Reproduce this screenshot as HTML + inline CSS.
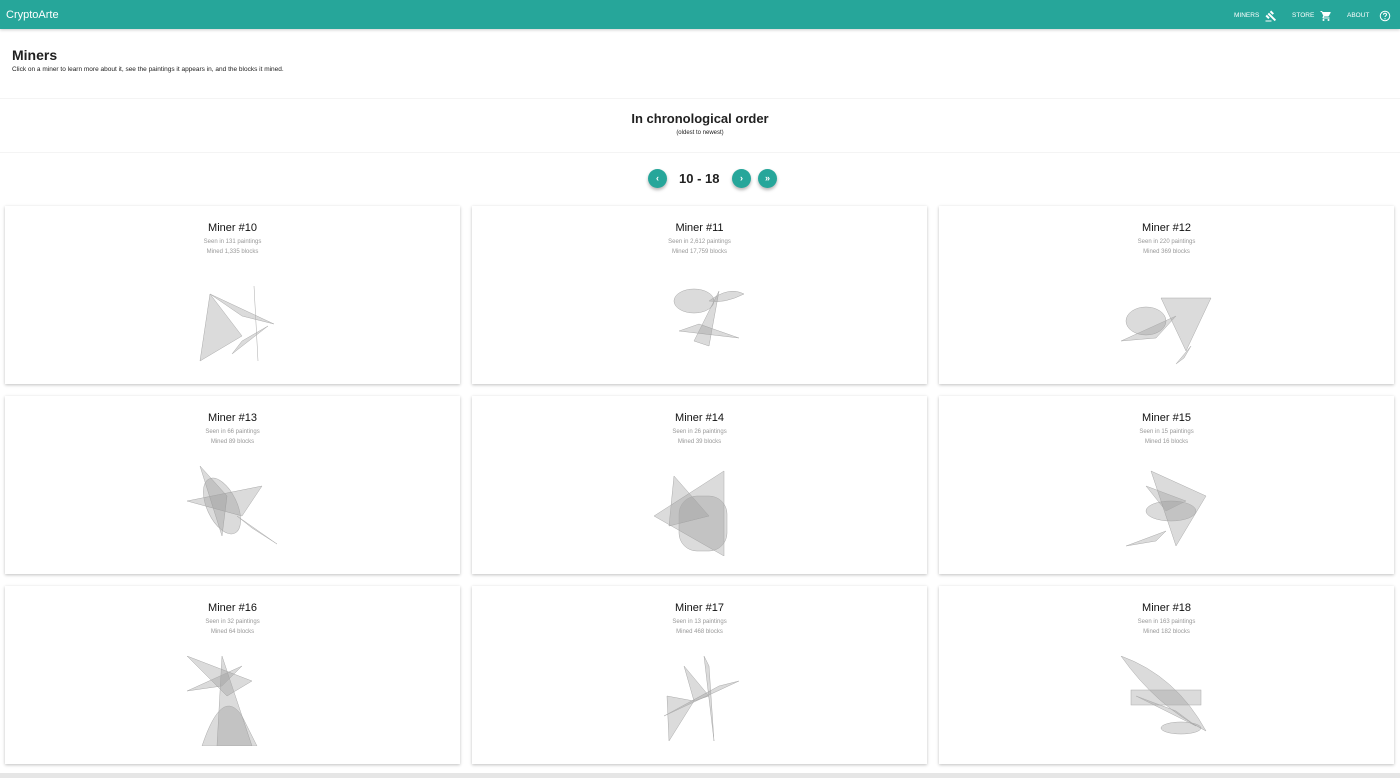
<!DOCTYPE html>
<html><head><meta charset="utf-8"><style>
*{box-sizing:border-box;margin:0;padding:0}
body{width:1400px;height:778px;overflow:hidden;background:#fff;font-family:"Liberation Sans",Arial,sans-serif;color:#212121}
.bar{height:29px;background:#26a69a;color:#fff;position:relative;box-shadow:0 1px 3px rgba(0,0,0,.2)}
.logo{position:absolute;left:6px;top:9px;font-size:11px}
.nav{position:absolute;top:1px;height:29px;font-size:6.5px;display:flex;align-items:center;gap:6px}
h1{position:absolute;left:12px;top:47px;font-size:14px;font-weight:bold}
.sub{position:absolute;left:12px;top:66px;font-size:6.5px}
.hr{position:absolute;left:0;right:0;height:1px;background:#f4f4f4}
h2{position:absolute;left:0;width:1400px;text-align:center;top:111px;font-size:13px;font-weight:bold}
.sm{position:absolute;left:0;width:1400px;text-align:center;top:130px;font-size:6px}
.btn{position:absolute;top:169px;width:19px;height:19px;border-radius:50%;background:#26a69a;color:#fff;font-size:9px;text-align:center;line-height:19px;box-shadow:0 2px 3px rgba(0,0,0,.3);font-weight:bold}
.pg{position:absolute;left:679px;top:171px;font-size:13px;font-weight:bold}
.card{position:absolute;width:455px;height:178px;background:#fff;box-shadow:0 1px 3px rgba(0,0,0,.25);text-align:center}
.card .t{margin-top:16px;font-size:11px;color:#111;line-height:13px}
.card .s{font-size:6px;color:#999;line-height:10px;margin-top:2px}
.card svg{position:absolute;left:177px;top:70px}
</style></head><body>
<div class="bar"><div class="logo">CryptoArte</div>
<div class="nav" style="left:1234px">MINERS <svg width="12" height="12" viewBox="0 0 24 24"><path fill="#fff" d="M1 21h12v2H1zM5.2 8.2l2.8-2.8 14.1 14.1-2.8 2.8zM12.3 1.1l5.6 5.6-2.8 2.8-5.6-5.6zM3.8 9.6l5.6 5.6-2.8 2.8-5.6-5.6z"/></svg></div>
<div class="nav" style="left:1292px">STORE <svg width="12" height="12" viewBox="0 0 24 24"><path fill="#fff" d="M7 18a2 2 0 100 4 2 2 0 000-4zM1 2v2h2l3.6 7.6-1.4 2.4A2 2 0 007 17h12v-2H7.4l1.1-2h7.4a2 2 0 001.8-1l3.6-6.5A1 1 0 0020.4 4H5.2l-.9-2zm16 16a2 2 0 100 4 2 2 0 000-4z"/></svg></div>
<div class="nav" style="left:1347px">ABOUT &nbsp;<svg width="12" height="12" viewBox="0 0 24 24"><circle cx="12" cy="12" r="9.5" fill="none" stroke="#fff" stroke-width="2"/><path d="M9 9.5a3 3 0 116 0c0 2-3 2.2-3 4.5" fill="none" stroke="#fff" stroke-width="2"/><circle cx="12" cy="17.5" r="1.2" fill="#fff"/></svg></div>
</div>
<h1>Miners</h1>
<div class="sub">Click on a miner to learn more about it, see the paintings it appears in, and the blocks it mined.</div>
<div class="hr" style="top:98px"></div>
<h2>In chronological order</h2>
<div class="sm">(oldest to newest)</div>
<div class="hr" style="top:152px"></div>
<div class="btn" style="left:648px">‹</div>
<div class="pg">10 - 18</div>
<div class="btn" style="left:732px">›</div>
<div class="btn" style="left:758px">»</div>

<div class="card" style="left:5px;top:206px"><div class="t">Miner #10</div><div class="s">Seen in 131 paintings<br>Mined 1,335 blocks</div>
<svg width="100" height="90"><g fill="#999" fill-opacity=".35" stroke="#aaa" stroke-width=".5"><polygon points="18,85 28,18 60,60"/><polygon points="28,18 92,48 60,40"/><polygon points="50,78 86,50 60,65"/><line x1="72" y1="10" x2="76" y2="85"/></g></svg></div>
<div class="card" style="left:472px;top:206px"><div class="t">Miner #11</div><div class="s">Seen in 2,612 paintings<br>Mined 17,759 blocks</div>
<svg width="100" height="90"><g fill="#999" fill-opacity=".35" stroke="#aaa" stroke-width=".5"><ellipse cx="45" cy="25" rx="20" ry="12"/><polygon points="30,55 90,62 50,48"/><polygon points="45,65 70,15 60,70"/><path d="M60 25 Q80 10 95 18 Q75 28 60 25"/></g></svg></div>
<div class="card" style="left:939px;top:206px"><div class="t">Miner #12</div><div class="s">Seen in 220 paintings<br>Mined 369 blocks</div>
<svg width="100" height="90"><g fill="#999" fill-opacity=".35" stroke="#aaa" stroke-width=".5"><polygon points="45,22 95,22 70,75"/><ellipse cx="30" cy="45" rx="20" ry="14"/><polygon points="5,65 60,40 40,62"/><polygon points="60,88 75,70 68,82"/></g></svg></div>
<div class="card" style="left:5px;top:396px"><div class="t">Miner #13</div><div class="s">Seen in 66 paintings<br>Mined 89 blocks</div>
<svg width="100" height="90"><g fill="#999" fill-opacity=".35" stroke="#aaa" stroke-width=".5"><polygon points="18,0 40,70 45,30"/><polygon points="5,35 80,20 60,50"/><ellipse cx="40" cy="40" rx="15" ry="30" transform="rotate(-25 40 40)"/><polygon points="55,50 95,78 70,62"/></g></svg></div>
<div class="card" style="left:472px;top:396px"><div class="t">Miner #14</div><div class="s">Seen in 26 paintings<br>Mined 39 blocks</div>
<svg width="100" height="90"><g fill="#999" fill-opacity=".35" stroke="#aaa" stroke-width=".5"><polygon points="5,50 75,5 75,90"/><polygon points="25,10 60,50 20,60"/><rect x="30" y="30" width="48" height="55" rx="18"/></g></svg></div>
<div class="card" style="left:939px;top:396px"><div class="t">Miner #15</div><div class="s">Seen in 15 paintings<br>Mined 16 blocks</div>
<svg width="100" height="90"><g fill="#999" fill-opacity=".35" stroke="#aaa" stroke-width=".5"><polygon points="35,5 60,80 90,30"/><ellipse cx="55" cy="45" rx="25" ry="10"/><polygon points="10,80 50,65 40,75"/><polygon points="30,20 70,35 50,45"/></g></svg></div>
<div class="card" style="left:5px;top:586px"><div class="t">Miner #16</div><div class="s">Seen in 32 paintings<br>Mined 64 blocks</div>
<svg width="100" height="90"><g fill="#999" fill-opacity=".35" stroke="#aaa" stroke-width=".5"><polygon points="5,0 70,25 45,40"/><polygon points="40,0 35,90 70,90"/><path d="M20 90 Q40 30 60 60 L75 90Z"/><polygon points="5,35 60,10 40,30"/></g></svg></div>
<div class="card" style="left:472px;top:586px"><div class="t">Miner #17</div><div class="s">Seen in 13 paintings<br>Mined 468 blocks</div>
<svg width="100" height="90"><g fill="#999" fill-opacity=".35" stroke="#aaa" stroke-width=".5"><polygon points="18,40 20,85 45,45"/><polygon points="15,60 70,30 90,25"/><polygon points="55,0 65,85 60,10"/><polygon points="35,10 60,40 45,45"/></g></svg></div>
<div class="card" style="left:939px;top:586px"><div class="t">Miner #18</div><div class="s">Seen in 163 paintings<br>Mined 182 blocks</div>
<svg width="100" height="90"><g fill="#999" fill-opacity=".35" stroke="#aaa" stroke-width=".5"><path d="M5 0 Q60 20 90 75 Q40 50 5 0Z"/><rect x="15" y="34" width="70" height="15"/><polygon points="20,40 80,70 60,55"/><ellipse cx="65" cy="72" rx="20" ry="6"/></g></svg></div>
<div style="position:absolute;left:0;right:0;top:773px;height:5px;background:#e6e6e6"></div>
</body></html>
